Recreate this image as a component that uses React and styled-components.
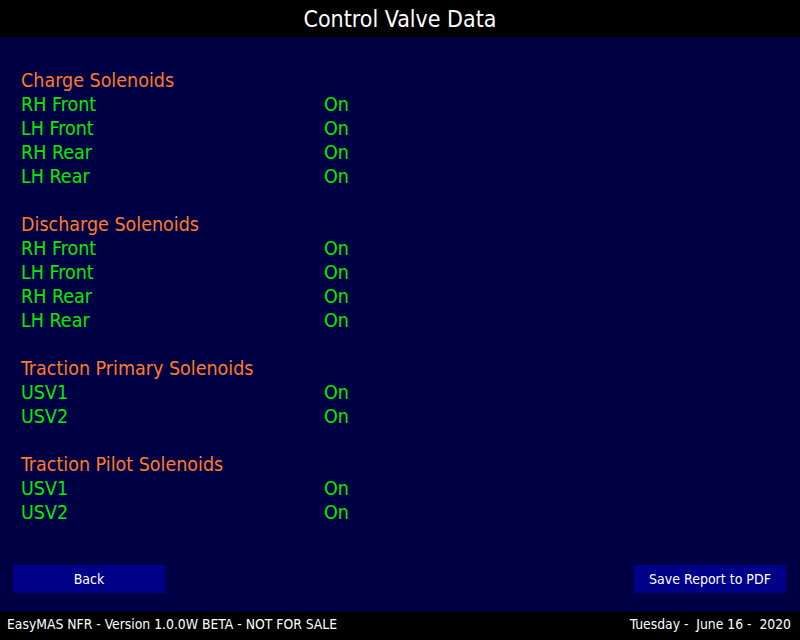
import React from 'react';
import styled, { createGlobalStyle } from 'styled-components';

const GlobalStyle = createGlobalStyle`
  html, body {
    margin: 0;
    padding: 0;
    background: #000044;
  }
  body {
    font-family: "DejaVu Sans Condensed", "DejaVu Sans", sans-serif;
  }
`;

const Screen = styled.div`
  width: 800px;
  height: 640px;
  display: flex;
  flex-direction: column;
  background: #000044;
  overflow: hidden;
`;

const TitleBar = styled.header`
  height: 37px;
  background: #000;
  color: #fff;
  display: flex;
  align-items: center;
  justify-content: center;
  font-size: 23px;
`;

const Content = styled.main`
  flex: 1;
  padding: 32px 0 0 21px;
  display: flex;
  flex-direction: column;
`;

const Section = styled.section`
  margin-bottom: 24px;
`;

const SectionTitle = styled.div`
  color: #ff7a2a;
  font-size: 19.5px;
  line-height: 24px;
`;

const Row = styled.div`
  display: grid;
  grid-template-columns: 303px auto;
  color: #00ee00;
  font-size: 19.5px;
  line-height: 24px;
`;

const ButtonBar = styled.div`
  display: flex;
  justify-content: space-between;
  padding: 0 14px 19px 13px;
`;

const Button = styled.button`
  width: 152px;
  height: 28px;
  border: none;
  background: #000088;
  color: #fff;
  font-family: inherit;
  font-size: 14px;
  padding: 0;
  cursor: pointer;
`;

const Footer = styled.footer`
  height: 28px;
  background: #000;
  color: #fff;
  display: flex;
  align-items: center;
  justify-content: space-between;
  padding: 0 9px 5px 7px;
  box-sizing: border-box;
  font-size: 13.8px;
`;

const sections = [
  { title: 'Charge Solenoids', rows: ['RH Front', 'LH Front', 'RH Rear', 'LH Rear'] },
  { title: 'Discharge Solenoids', rows: ['RH Front', 'LH Front', 'RH Rear', 'LH Rear'] },
  { title: 'Traction Primary Solenoids', rows: ['USV1', 'USV2'] },
  { title: 'Traction Pilot Solenoids', rows: ['USV1', 'USV2'] },
];

export default function App() {
  return (
    <Screen>
      <GlobalStyle />
      <TitleBar>Control Valve Data</TitleBar>
      <Content>
        {sections.map((s) => (
          <Section key={s.title}>
            <SectionTitle>{s.title}</SectionTitle>
            {s.rows.map((r) => (
              <Row key={r}>
                <span>{r}</span>
                <span>On</span>
              </Row>
            ))}
          </Section>
        ))}
      </Content>
      <ButtonBar>
        <Button>Back</Button>
        <Button>Save Report to PDF</Button>
      </ButtonBar>
      <Footer>
        <span>EasyMAS NFR - Version 1.0.0W BETA - NOT FOR SALE</span>
        <span>Tuesday -&nbsp; June 16 -&nbsp; 2020</span>
      </Footer>
    </Screen>
  );
}
